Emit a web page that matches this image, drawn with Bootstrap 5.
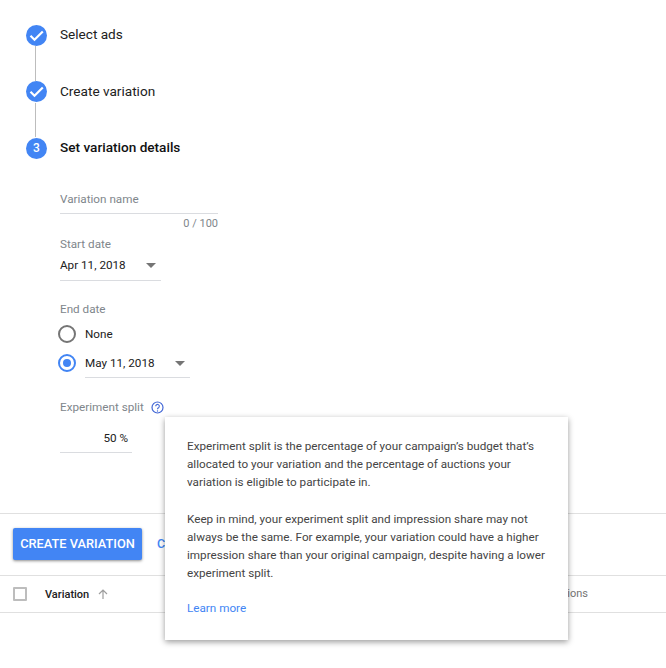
<!DOCTYPE html>
<html lang="en">
<head>
<meta charset="utf-8">
<title>Create variation</title>
<link href="https://cdn.jsdelivr.net/npm/bootstrap@5.3.0/dist/css/bootstrap.min.css" rel="stylesheet">
<style>
html,body{height:668px;overflow:hidden}
body{position:relative;font-family:Roboto,"Liberation Sans",sans-serif;font-size:11.7px;color:#212121;background:#fff}
.step-row{height:22px;padding-left:26px;gap:13px;font-size:13.6px;line-height:20px;color:#212121}
.step-row.now{font-weight:500;color:#111}
.step-text{padding-bottom:2px}
.step-dot{width:21px;height:21px;border-radius:50%;background:#4285f4;color:#fff;font-size:12px;font-weight:500;flex:none}
.step-link{width:1px;height:34.5px;background:#bdbdbd;margin-left:35px}
.form-area{padding-left:60px;padding-top:32px}
.field-label{color:#80868b;line-height:16px}
.under{border-bottom:1px solid #dadce0}
.name-field{width:158px;height:23px}
.count{width:158px;text-align:right;color:#80868b;font-size:11px;line-height:14px;margin-top:3px}
.date-pick{line-height:16px;color:#212121}
.caret-tri{width:0;height:0;border-left:5px solid transparent;border-right:5px solid transparent;border-top:5px solid #757575;margin-top:1px}
.radio-off,.radio-on{width:18px;height:18px;border-radius:50%;flex:none;margin-left:-2px}
.radio-off{border:2px solid #757575}
.radio-on{border:2px solid #4285f4;padding:3px}
.radio-on span{display:block;width:8px;height:8px;border-radius:50%;background:#4285f4}
.split-box{width:72px;height:26px;text-align:right;padding-right:4px;line-height:22px}
.rule{border-top:1px solid #e0e0e0}
.act-bar{height:61px;padding-left:13px;padding-bottom:1px;gap:15px}
.go-btn{background:#4285f4;border:0;border-radius:2px;color:#fff;font-size:12.8px;font-weight:500;width:129px;height:32px;padding:0;box-shadow:0 1px 3px rgba(0,0,0,.45)}
.go-link{color:#4285f4;font-weight:500;text-decoration:none;font-size:12.5px}
.head-row{height:38px;padding-left:13px;border-top:1px solid #e0e0e0;border-bottom:1px solid #e0e0e0;position:relative}
.chk{width:14px;height:14px;border:2px solid #bdbdbd;border-radius:1px;margin-right:18px}
.col-name{font-size:11px;font-weight:500;color:#212121;padding-top:3px}
.col-end{position:absolute;right:78px;top:10px;font-size:11px;color:#757575}
.info-pop{position:absolute;left:165px;top:417px;width:403px;height:223px;background:#fff;padding:20px 22px;box-shadow:0 2px 6px rgba(0,0,0,.4);color:#444;line-height:18px}
.info-pop p{margin:0 0 19px}
.info-pop p+p{margin-bottom:17px}
.info-pop a{color:#4285f4;text-decoration:none}
</style>
</head>
<body>
<div style="height:24px"></div>
<div class="d-flex align-items-center step-row"><span class="d-flex align-items-center justify-content-center step-dot"><svg width="21" height="21" viewBox="0 0 21 21"><path d="M4.5 10.8l4 4L16.8 6.5" fill="none" stroke="#fff" stroke-width="2.2"/></svg></span><span class="step-text">Select ads</span></div>
<div class="step-link"></div>
<div class="d-flex align-items-center step-row"><span class="d-flex align-items-center justify-content-center step-dot"><svg width="21" height="21" viewBox="0 0 21 21"><path d="M4.5 10.8l4 4L16.8 6.5" fill="none" stroke="#fff" stroke-width="2.2"/></svg></span><span class="step-text">Create variation</span></div>
<div class="step-link"></div>
<div class="d-flex align-items-center step-row now"><span class="d-flex align-items-center justify-content-center step-dot">3</span><span class="step-text">Set variation details</span></div>

<div class="form-area">
  <div class="field-label under name-field">Variation name</div>
  <div class="count">0 / 100</div>
  <div class="field-label" style="margin-top:5px">Start date</div>
  <div class="d-flex align-items-center justify-content-between date-pick under" style="width:101px;height:29px;padding-right:5px;padding-bottom:2px"><span>Apr 11, 2018</span><span class="caret-tri"></span></div>
  <div class="field-label" style="margin-top:20px">End date</div>
  <div class="d-flex align-items-center" style="height:28px;gap:9px;margin-top:3px"><span class="radio-off"></span><span class="date-pick">None</span></div>
  <div class="d-flex align-items-center" style="height:30px;gap:9px"><span class="radio-on"><span></span></span><span class="d-flex align-items-center justify-content-between date-pick under" style="width:105px;height:30px;padding-right:5px;padding-top:1px"><span>May 11, 2018</span><span class="caret-tri"></span></span></div>
  <div class="d-flex align-items-center field-label" style="margin-top:21px;gap:7px"><span>Experiment split</span><svg width="13" height="13" viewBox="0 0 13 13"><circle cx="6.5" cy="6.5" r="5.5" fill="none" stroke="#4267d6" stroke-width="1.2"/><path d="M4.7 5.2a1.8 1.8 0 1 1 2.8 1.5c-.7.4-1 .8-1 1.5" fill="none" stroke="#4267d6" stroke-width="1.1"/><circle cx="6.5" cy="10" r=".7" fill="#4267d6"/></svg></div>
  <div class="under split-box" style="margin-top:12px;color:#212121">50 %</div>
</div>

<div class="rule" style="margin-top:60px"></div>
<div class="d-flex align-items-center act-bar"><button type="button" class="btn go-btn">CREATE VARIATION</button><a href="#" class="go-link">CANCEL</a></div>
<div class="d-flex align-items-center head-row"><span class="chk"></span><span class="col-name">Variation</span><svg class="ms-2" width="12" height="12" viewBox="0 0 12 12"><path d="M6 11V2M2 6l4-4 4 4" fill="none" stroke="#9e9e9e" stroke-width="1.2"/></svg><span class="col-end">Actions</span></div>

<div class="info-pop">
  <p>Experiment split is the percentage of your campaign’s budget that’s<br>allocated to your variation and the percentage of auctions your<br>variation is eligible to participate in.</p>
  <p>Keep in mind, your experiment split and impression share may not<br>always be the same. For example, your variation could have a higher<br>impression share than your original campaign, despite having a lower<br>experiment split.</p>
  <a href="#">Learn more</a>
</div>
<script src="https://cdn.jsdelivr.net/npm/bootstrap@5.3.0/dist/js/bootstrap.bundle.min.js"></script>
</body>
</html>
